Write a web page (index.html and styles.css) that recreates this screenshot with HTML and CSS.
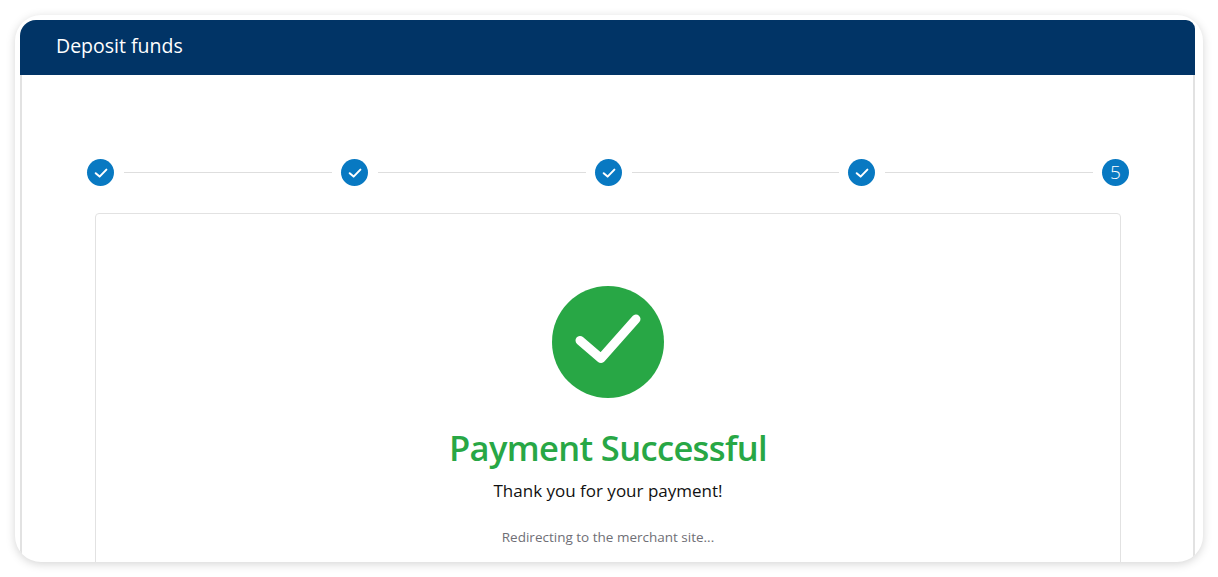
FILE: index.html
```html
<!DOCTYPE html>
<html lang="en">
<head>
  <meta charset="UTF-8">
  <meta name="viewport" content="width=device-width, initial-scale=1.0">
  <title>Deposit funds</title>
  <link rel="stylesheet" href="styles.css">
</head>
<body>
  <div class="frame">
    <div class="panel">
      <header class="header">
        <h1>Deposit funds</h1>
      </header>
      <main class="content">
        <!-- Steps -->
        <div class="steps">
          <div class="step"><svg viewBox="0 0 27 27"><path d="M8.7 14.2L12.6 17.6L19.4 10.6"/></svg></div>
          <div class="line"></div>
          <div class="step"><svg viewBox="0 0 27 27"><path d="M8.7 14.2L12.6 17.6L19.4 10.6"/></svg></div>
          <div class="line"></div>
          <div class="step"><svg viewBox="0 0 27 27"><path d="M8.7 14.2L12.6 17.6L19.4 10.6"/></svg></div>
          <div class="line"></div>
          <div class="step"><svg viewBox="0 0 27 27"><path d="M8.7 14.2L12.6 17.6L19.4 10.6"/></svg></div>
          <div class="line"></div>
          <div class="step">5</div>
        </div>
        <!-- Result -->
        <section class="card">
          <div class="success-icon"><svg viewBox="0 0 112 112"><path d="M28 54.5L49 72.5L84 33"/></svg></div>
          <h2>Payment Successful</h2>
          <p class="thanks">Thank you for your payment!</p>
          <p class="redirect">Redirecting to the merchant site...</p>
        </section>
      </main>
    </div>
  </div>
</body>
</html>
```

FILE: styles.css
```css
html, body {
  height: 100%;
}
body {
  margin: 0;
  padding: 15px;
  box-sizing: border-box;
  font-family: "Open Sans", "Noto Sans", Arial, sans-serif;
  background-color: #ffffff;
  color: #111111;
  overflow: hidden;
}
.frame {
  width: 1188px;
  height: 547px;
  padding: 5px 8px 0 5px;
  box-sizing: border-box;
  background-color: #ffffff;
  border-radius: 26px;
  box-shadow: 0 2px 10px rgba(0, 0, 0, 0.17);
  overflow: hidden;
}
.panel {
  height: 100%;
  border-radius: 16px 9px 0 0;
  overflow: hidden;
}
.header {
  height: 55px;
  padding: 0 0 4px 36px;
  box-sizing: border-box;
  display: flex;
  align-items: center;
  background-color: #013466;
}
.header h1 {
  margin: 0;
  font-size: 19.5px;
  font-weight: 400;
  color: #ffffff;
}
.content {
  height: 100%;
  box-sizing: border-box;
  padding: 84px 64px 0 65px;
  border-left: 2px solid #e2e2e2;
  border-right: 2px solid #e2e2e2;
}
.steps {
  display: flex;
  align-items: center;
  gap: 10px;
}
.step {
  flex: none;
  width: 27px;
  height: 27px;
  border-radius: 50%;
  background-color: #0879c2;
  color: #ffffff;
  font-size: 19px;
  font-weight: 300;
  line-height: 27px;
  text-align: center;
}
.step svg {
  display: block;
  fill: none;
  stroke: #ffffff;
  stroke-width: 2;
  stroke-linecap: round;
  stroke-linejoin: round;
}
.line {
  flex: 1;
  height: 1px;
  margin: -1px -1px 0 0;
  background-color: #dedede;
}
.card {
  margin: 27px 8px 0 8px;
  height: 400px;
  padding-top: 72px;
  box-sizing: border-box;
  border: 1px solid #e2e2e2;
  border-radius: 4px;
  text-align: center;
}
.success-icon {
  width: 112px;
  height: 112px;
  margin: 0 auto;
  border-radius: 50%;
  background-color: #28a745;
}
.success-icon svg {
  display: block;
  fill: none;
  stroke: #ffffff;
  stroke-width: 9;
  stroke-linecap: round;
  stroke-linejoin: round;
}
.card h2 {
  margin: 27px 0 0 0;
  font-size: 34.5px;
  line-height: 46px;
  font-weight: 600;
  letter-spacing: -0.65px;
  color: #28a745;
}
.thanks {
  margin: 8px 0 0 0;
  font-size: 17px;
  line-height: 24px;
}
.redirect {
  margin: 25px 0 0 0;
  font-size: 13.5px;
  line-height: 18px;
  color: #6f6f76;
}
```
